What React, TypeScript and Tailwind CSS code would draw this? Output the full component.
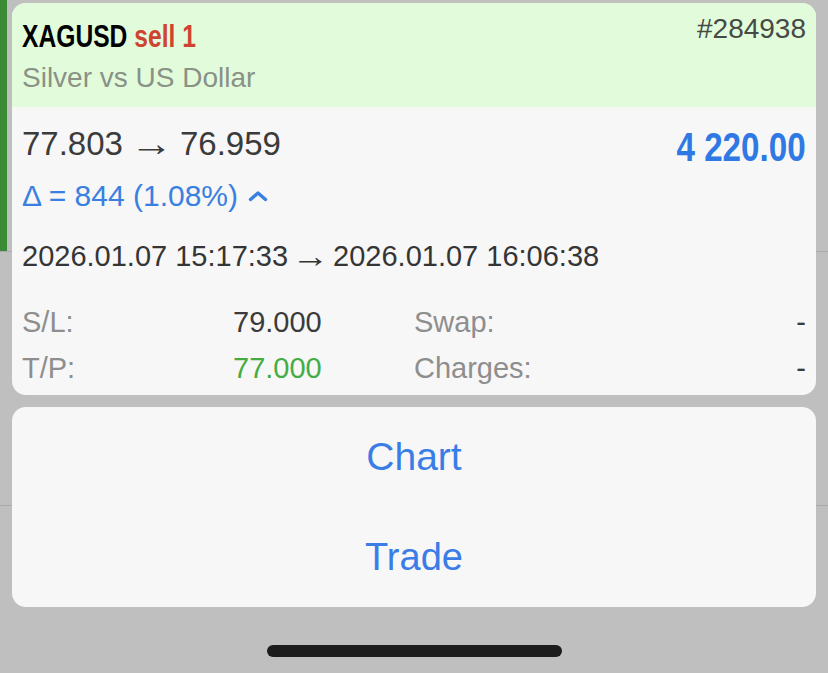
import React from "react";

const sans = "font-['Liberation_Sans',Arial,sans-serif]";

function Arrow({ wide }: { wide?: boolean }) {
  return <span className={`inline-block scale-x-[1.3] scale-y-[1.1] ${wide ? "mx-[12px]" : "mx-[8px]"}`}>→</span>;
}

function ChevronUp() {
  return (
    <svg width="20" height="12" viewBox="0 0 20 12" className="ml-[10px] mt-[2px]">
      <polyline
        points="2.5,9.5 10,3 17.5,9.5"
        fill="none"
        stroke="#3a80e0"
        strokeWidth="3.4"
        strokeLinecap="round"
        strokeLinejoin="round"
      />
    </svg>
  );
}

export default function App() {
  return (
    <div className={`relative w-[828px] h-[673px] overflow-hidden bg-[#bfbfbf] ${sans}`}>
      {/* list behind the dimmed overlay */}
      <div className="absolute left-0 top-0 w-[7px] h-[251px] bg-[#3b8a35]" />
      <div className="absolute left-0 top-[251px] w-full h-px bg-[#a9a9a9]" />
      <div className="absolute left-0 top-[505px] w-full h-px bg-[#a9a9a9]" />

      <div className="relative z-10 flex flex-col px-[12px] pt-[3px]">
        {/* position card */}
        <div className="rounded-[14px] overflow-hidden bg-[#f7f7f7]">
          <div className="h-[104px] bg-[#e2fcdb] px-[10px] pt-[10px]">
            <div className="flex justify-between items-start">
              <div className="mt-[5px] text-[32px] leading-[36px] font-bold whitespace-nowrap origin-left scale-x-[0.77]">
                <span className="text-black">XAGUSD</span>{" "}
                <span className="text-[#cf4431]">sell 1</span>
              </div>
              <div className="text-[28px] leading-[32px] text-[#454a45]">#284938</div>
            </div>
            <div className="mt-[8px] text-[28px] leading-[32px] text-[#8a9186]">Silver vs US Dollar</div>
          </div>

          <div className="px-[10px] pt-[18px] pb-[3px]">
            <div className="flex justify-between items-start">
              <div className="flex items-center text-[33px] leading-[38px] text-[#3b3b3b] whitespace-nowrap">
                <span>77.803</span>
                <Arrow wide />
                <span>76.959</span>
              </div>
              <div className="mt-[3px] text-[40px] leading-[38px] font-bold text-[#2f79e4] whitespace-nowrap origin-right scale-x-[0.83]">
                4 220.00
              </div>
            </div>
            <div className="mt-[13px] flex items-center h-[32px] text-[30px] text-[#3a80e0]">
              <span>Δ = 844 (1.08%)</span>
              <ChevronUp />
            </div>
            <div className="mt-[30px] h-[32px] flex items-center text-[29px] text-[#353535] whitespace-nowrap">
              <span>2026.01.07 15:17:33</span>
              <Arrow />
              <span>2026.01.07 16:06:38</span>
            </div>
            <div className="mt-[27px] grid grid-cols-[211px_181px_1fr_auto] auto-rows-[46px] items-center text-[29px]">
              <span className="text-[#8e8e8e]">S/L:</span>
              <span className="text-[#3b3b3b]">79.000</span>
              <span className="text-[#8e8e8e]">Swap:</span>
              <span className="text-[#3b3b3b]">-</span>
              <span className="text-[#8e8e8e]">T/P:</span>
              <span className="text-[#43ad43]">77.000</span>
              <span className="text-[#8e8e8e]">Charges:</span>
              <span className="text-[#3b3b3b]">-</span>
            </div>
          </div>
        </div>

        {/* action sheet */}
        <div className="mt-[12px] rounded-[14px] bg-[#f7f7f7] flex flex-col">
          <button className="h-[100px] flex items-center justify-center text-[39px] text-[#3a7de6]">Chart</button>
          <button className="h-[100px] flex items-center justify-center text-[38px] text-[#3a7de6]">Trade</button>
        </div>

        <div className="mt-[38px] flex justify-center">
          <div className="w-[295px] h-[12px] rounded-full bg-[#1c1c1c]" />
        </div>
      </div>
    </div>
  );
}
